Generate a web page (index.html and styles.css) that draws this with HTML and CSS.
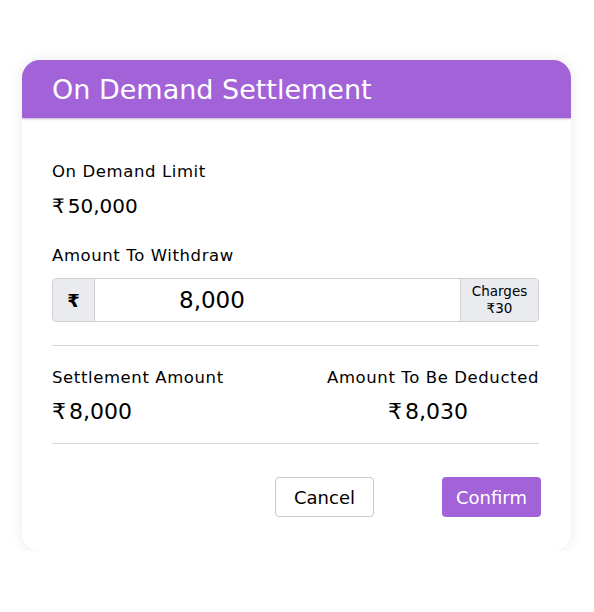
FILE: index.html
```
<!DOCTYPE html>
<html>
<head>
<meta charset="utf-8">
<link rel="stylesheet" href="styles.css">
</head>
<body>
<div class="card">
  <div class="card-header">On Demand Settlement</div>
  <div class="card-body">
    <div class="label">On Demand Limit</div>
    <div class="value"><span class="rs">₹</span>50,000</div>
    <div class="label label-withdraw">Amount To Withdraw</div>
    <div class="input-group">
      <div class="addon addon-left">₹</div>
      <div class="input-field">8,000</div>
      <div class="addon addon-right"><span>Charges</span><span>₹30</span></div>
    </div>
    <div class="divider div-top"></div>
    <div class="summary">
      <div class="col col-left">
        <div class="label">Settlement Amount</div>
        <div class="value value-lg"><span class="rs">₹</span>8,000</div>
      </div>
      <div class="col col-right">
        <div class="label">Amount To Be Deducted</div>
        <div class="value value-lg value-right"><span class="rs">₹</span>8,030</div>
      </div>
    </div>
    <div class="divider div-bottom"></div>
    <div class="actions">
      <button class="btn btn-cancel">Cancel</button>
      <button class="btn btn-confirm">Confirm</button>
    </div>
  </div>
</div>
</body>
</html>
```
FILE: styles.css
```
html, body {
  margin: 0;
  padding: 0;
  background: #ffffff;
}
body {
  font-family: "DejaVu Sans", "Noto Sans", sans-serif;
  color: #000000;
  padding-top: 60px;
}
.card {
  margin-left: 22px;
  width: 549px;
  height: 491px;
  border-radius: 18px;
  background: #ffffff;
  box-shadow: 0 0 14px rgba(0, 0, 0, 0.09);
  overflow: hidden;
}
.card-header {
  height: 58px;
  line-height: 60px;
  background: #a263d9;
  color: #ffffff;
  font-size: 27px;
  padding-left: 30px;
  box-shadow: 0 1px 2px rgba(80, 30, 120, 0.35);
  position: relative;
}
.card-body {
  padding: 42px 32px 0 30px;
}
.label {
  font-size: 16.5px;
  letter-spacing: 0.6px;
  line-height: 24px;
  color: #000000;
}
.value {
  font-size: 20px;
  line-height: 28px;
  margin-top: 8px;
  color: #000000;
}
.value-lg {
  font-size: 22px;
  margin-top: 8px;
}
.value-right {
  padding-right: 10px;
}
.rs {
  margin-right: 3px;
}
.label-withdraw {
  margin-top: 24px;
}
.input-group {
  margin-top: 10px;
  display: flex;
  height: 44px;
  border: 1px solid #cfcfcf;
  border-radius: 4px;
  box-sizing: border-box;
  overflow: hidden;
}
.addon {
  background: #e9ebef;
  display: flex;
  align-items: center;
  justify-content: center;
}
.addon-left {
  width: 41px;
  border-right: 1px solid #cfcfcf;
  font-size: 18px;
  font-weight: 700;
}
.input-field {
  flex: 1;
  font-size: 23px;
  line-height: 42px;
  padding-left: 84px;
}
.addon-right {
  width: 77px;
  border-left: 1px solid #cfcfcf;
  flex-direction: column;
  font-size: 13.5px;
  line-height: 17px;
}
.divider {
  height: 1px;
  background: #d6d6d6;
}
.div-top {
  margin-top: 23px;
}
.summary {
  display: flex;
  justify-content: space-between;
  margin-top: 20px;
}
.col-right {
  display: flex;
  flex-direction: column;
  align-items: center;
}
.div-bottom {
  margin-top: 17px;
}
.actions {
  display: flex;
  justify-content: flex-end;
  gap: 68px;
  margin-top: 33px;
  margin-right: -2px;
}
.btn {
  width: 99px;
  height: 40px;
  font-family: inherit;
  font-size: 18px;
  border-radius: 4px;
  padding: 0;
}
.btn-cancel {
  background: #ffffff;
  border: 1px solid #c8c8c8;
  color: #000000;
}
.btn-confirm {
  background: #a263d9;
  border: none;
  color: #ffffff;
}
```
